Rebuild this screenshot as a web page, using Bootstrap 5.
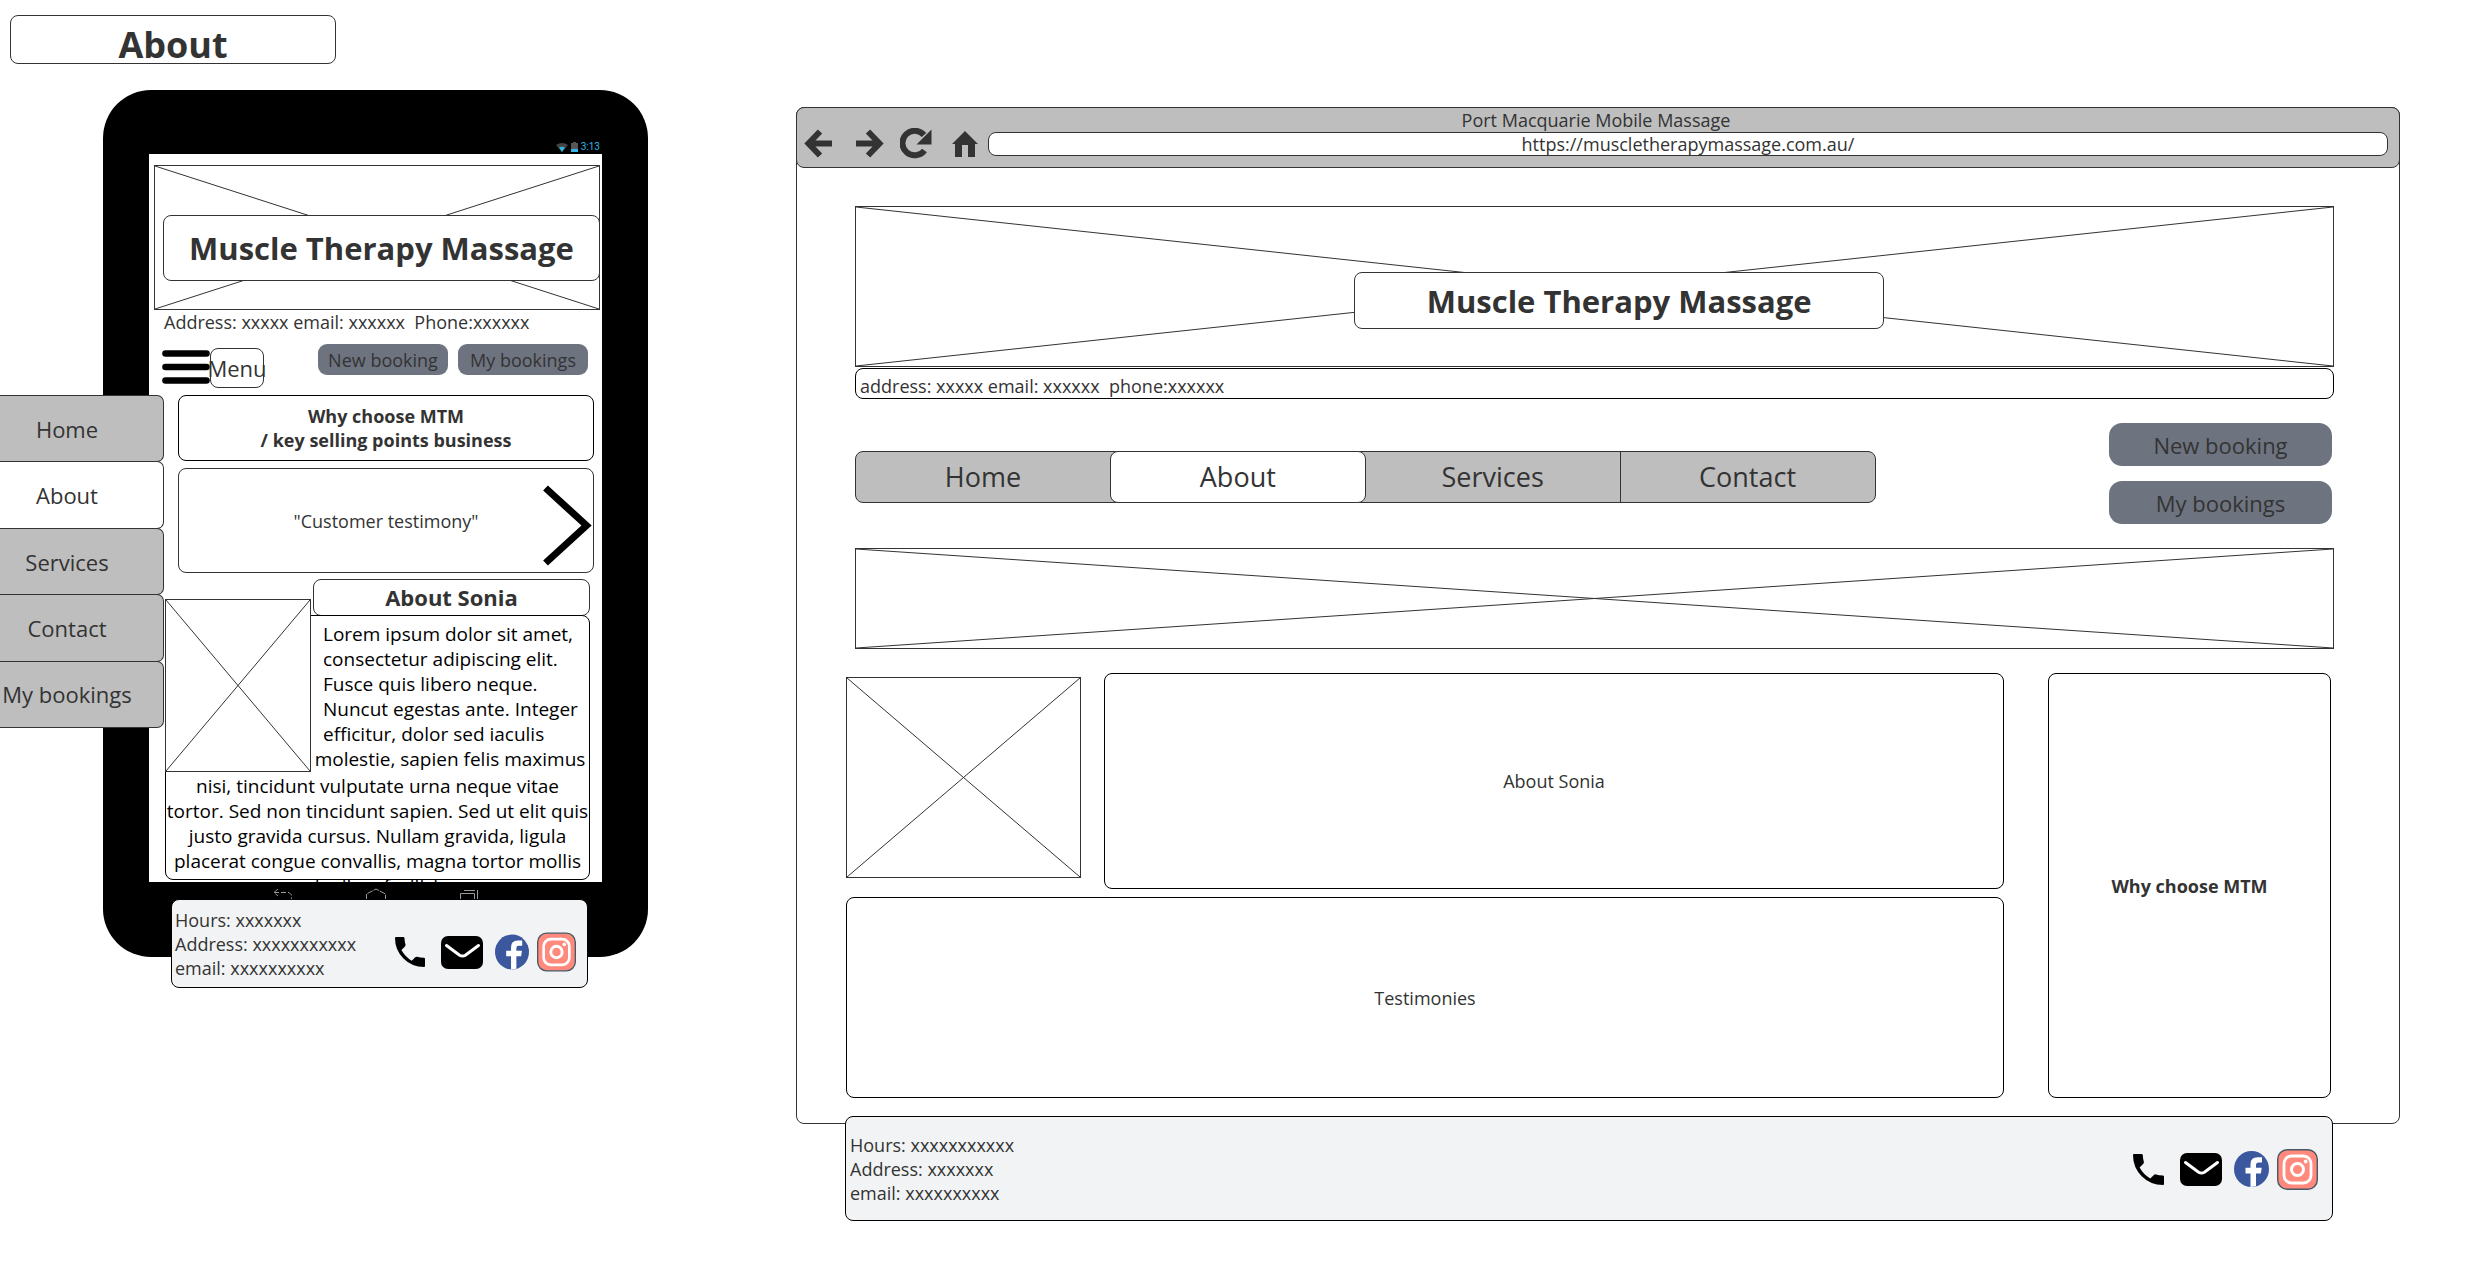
<!DOCTYPE html>
<html lang="en">
<head>
<meta charset="utf-8">
<meta name="viewport" content="width=device-width, initial-scale=1">
<title>Muscle Therapy Massage – About wireframe</title>
<link href="https://cdn.jsdelivr.net/npm/bootstrap@5.3.0/dist/css/bootstrap.min.css" rel="stylesheet">
<style>
  :root { --ink: #333; --fill: #bebebe; --action: #6e7380; --foot: #f1f3f5; }
  body { font-family: "Open Sans", sans-serif; font-size: 18px; line-height: 24px; color: var(--ink); background: #fff; overflow-x: hidden; }
  h1, h2, p, figure { margin: 0; }
  svg { display: block; }
  .frame { border: 1px solid var(--ink); border-radius: 8px; background: #fff; }
  .frame-dark { border: 1px solid #000; border-radius: 8px; background: #fff; }
  .site-title { font-size: 31px; line-height: 40px; font-weight: 700; white-space: nowrap; }

  /* crossed placeholder pictures */
  .placeholder-pic { position: relative; border: 1px solid var(--ink); background: #fff; }
  .placeholder-pic > svg { position: absolute; inset: 0; width: 100%; height: 100%; stroke: var(--ink); }

  /* left: page label and tablet */
  .col-tablet { flex: 0 0 796px; position: relative; padding-top: 15px; }
  .page-label { width: 326px; margin-left: 10px; padding-top: 10px; font-size: 36px; line-height: 37px; font-weight: 700; }
  .tablet { width: 545px; margin: 26px 0 0 103px; padding: 50px 46px 0; border-radius: 48px; background: #000; height: 867px; }
  .status-row { height: 14px; padding-right: 2px; gap: 3px; color: #33b5e5; font: 10px/14px Roboto, sans-serif; }
  .screen { overflow: hidden; background: #fff; padding: 11px 2px 2px 5px; }
  .screen-hero { height: 145px; padding: 49px 0 0 8px; }
  .screen-hero .frame { position: relative; height: 66px; margin-right: -1px; }
  .screen-address { padding-left: 10px; }
  .screen-tools { height: 44px; margin: 10px 12px 0 8px; }
  .screen-tools .toggler { width: 48px; padding: 0; border: 0; background: none; }
  .menu-tag { width: 54px; height: 40px; font-size: 22px; }
  .action { border: 0; background: var(--action); color: var(--ink); }
  .action-sm { width: 130px; height: 31px; border-radius: 9px; }
  .action-sm + .action-sm { margin-left: 10px; }
  .screen-cards { margin: 7px 6px 0 24px; gap: 7px; }
  .testimony { height: 105px; }
  .testimony .next { position: absolute; right: 1px; top: 16px; padding: 0; border: 0; background: none; }
  .bio { margin: 6px 10px 0 11px; color: #000; font-size: 19px; line-height: 25px; }
  .bio-head { width: 277px; height: 37px; color: var(--ink); font-size: 22px; line-height: 34px; }
  .bio-box { height: 265px; margin-top: -1px; padding-top: 6px; white-space: nowrap; }
  .bio-pic { flex: none; width: 146px; height: 173px; margin: -23px 0 2px -1px; }
  .bio-indent { padding-left: 12px; }
  .tablet-keys { height: 18px; padding-top: 6px; gap: 72px; overflow: hidden; }
  .tablet-foot { position: relative; width: 417px; margin: -58px 0 0 171px; padding: 8px 11px 7px 3px; }
  .contact-box { background: var(--foot); }

  /* slide-out menu over the tablet */
  .drawer { position: absolute; left: 0; top: 395px; width: 164px; height: 333px; }
  .drawer a { padding-right: 29px; border: 1px solid var(--ink); border-left: 0; border-radius: 0 7px 7px 0; background: var(--fill); color: var(--ink); font-size: 22px; text-decoration: none; white-space: nowrap; }
  .drawer a + a { margin-top: -1px; }
  .drawer a.current { background: #fff; }

  /* right: browser */
  .col-browser { padding: 107px 69px 0 0; min-width: 0; }
  .browser { border: 1px solid var(--ink); border-radius: 8px; }
  .chrome { margin: -1px; border: 1px solid var(--ink); border-radius: 8px; background: var(--fill); padding: 0 11px 11px 7px; }
  .chrome button { padding: 0; border: 0; background: none; color: var(--ink); }
  .chrome-buttons { margin: -4px 10px -3px 0; }
  .url { height: 24px; padding: 0; text-align: center; color: var(--ink); }
  .viewport { padding: 39px 65px 25px 58px; }
  .hero { height: 161px; padding: 65px 0 0 33.7%; }
  .hero .frame { position: relative; width: 54.1%; height: 57px; }
  .address-bar { height: 31px; margin-top: 1px; padding: 5px 4px 0; }
  .tabs { width: 69%; height: 52px; margin-top: 28px; border: 1px solid var(--ink); border-radius: 8px; background: var(--fill); }
  .tabs a { flex: 1; margin: -1px 0; color: var(--ink); font-size: 27px; line-height: 52px; text-align: center; text-decoration: none; }
  .tabs a.current { border: 1px solid var(--ink); border-radius: 8px; background: #fff; line-height: 50px; }
  .tabs a:last-child { border-left: 1px solid var(--ink); }
  .booking-actions { gap: 15px; padding-right: 2px; }
  .action-lg { width: 223px; height: 43px; border-radius: 13px; font-size: 22px; }
  .strip { height: 101px; margin-top: 24px; }
  .panels { margin: 24px 3px 0 -9px; gap: 44px; }
  .portrait { flex: 0 0 235px; height: 201px; margin: 4px 23px 0 0; }
  .about-panel { height: 216px; }
  .words-panel { height: 201px; margin-top: 8px; }
  .why-panel { flex: 0 0 283px; }
  .browser-foot { position: relative; margin: -8px 67px 0 49px; padding: 16px 14px 15px 4px; }
</style>
<script src="https://cdn.jsdelivr.net/npm/bootstrap@5.3.0/dist/js/bootstrap.bundle.min.js"></script>
</head>
<body>

<svg width="0" height="0" class="position-absolute" aria-hidden="true">
  <symbol id="cross" viewBox="0 0 100 100" preserveAspectRatio="none">
    <path d="M0 0L100 100M100 0L0 100" fill="none" vector-effect="non-scaling-stroke"/>
  </symbol>
  <symbol id="phone" viewBox="0 0 31 31">
    <path d="M0 1Q0 0 1 0H8.500Q9.700 0 9.800 1.200Q10 5 10.800 7.600Q11.200 8.800 10.300 9.700L6.600 13.500Q10.600 20.600 17.300 24.600L20.900 20.900Q21.700 20.100 22.900 20.500Q26 21.400 29.800 21.500Q31 21.600 31 22.800V30Q31 31 30 31Q17.500 31 8.700 22.200Q0 13.500 0 1Z"/>
  </symbol>
  <symbol id="mail" viewBox="0 0 42 33">
    <rect width="42" height="33" rx="7"/>
    <path d="M5.500 9.500L18.600 19.200Q21.500 21 24.400 19.200L37.500 9.500" fill="none" stroke="#fff" stroke-width="3" stroke-linecap="round"/>
  </symbol>
  <symbol id="facebook" viewBox="0 0 35 36">
    <ellipse cx="17.500" cy="18" rx="17.500" ry="18" fill="#3b579d"/>
    <path d="M16.500 36V22.500H11.500V16.800H16.500V13Q16.500 6.200 23.500 6.200H28V11.500H24.500Q22 11.500 22 14V16.800H27.700L26.900 22.500H22V35.300Z" fill="#fff"/>
  </symbol>
  <symbol id="instagram" viewBox="0 0 41 41">
    <rect x=".7" y=".7" width="39.600" height="39.600" rx="9.500" fill="#ff897d" stroke="#455a64" stroke-width="1.400"/>
    <rect x="7" y="7" width="27" height="27" rx="7.500" fill="none" stroke="#fff" stroke-width="2.800"/>
    <circle cx="20.500" cy="20.500" r="6" fill="none" stroke="#fff" stroke-width="3"/>
    <circle cx="28.700" cy="12.500" r="1.900" fill="#fff"/>
  </symbol>
</svg>

<div class="d-flex align-items-start">

  <section class="col-tablet">
    <h1 class="page-label frame text-center">About</h1>

    <div class="tablet">
      <div class="status-row d-flex justify-content-end align-items-center">
        <svg width="12" height="9" viewBox="0 0 12 9" aria-hidden="true"><path d="M0 2Q6-2 12 2L6 9Z" fill="#444"/><path d="M3 4.500Q6 3 9 4.500L6 9Z" fill="#33b5e5"/></svg>
        <svg width="7" height="10" viewBox="0 0 7 10" aria-hidden="true"><path d="M2 0H5V1H7V10H0V1H2Z" fill="#555"/><path d="M0 7H7V10H0Z" fill="#33b5e5"/></svg>
        <span>3:13</span>
      </div>

      <div class="screen">
        <div class="screen-hero placeholder-pic">
          <svg aria-hidden="true"><use href="#cross"/></svg>
          <div class="frame site-title d-flex align-items-center justify-content-center">Muscle Therapy Massage</div>
        </div>
        <p class="screen-address text-nowrap">Address: xxxxx email: xxxxxx&nbsp; Phone:xxxxxx</p>

        <div class="screen-tools d-flex align-items-start">
          <button class="toggler align-self-end pb-1" type="button" aria-label="Open menu">
            <svg width="48" height="34" viewBox="0 0 48 34" stroke="#000" stroke-width="6.600" stroke-linecap="round"><path d="M3.500 3.500H44.500M3.500 17H44.500M3.500 30.500H44.500"/></svg>
          </button>
          <span class="menu-tag frame align-self-end d-flex align-items-center justify-content-center">Menu</span>
          <button class="action action-sm ms-auto" type="button">New booking</button>
          <button class="action action-sm" type="button">My bookings</button>
        </div>

        <div class="screen-cards d-flex flex-column">
          <div class="frame-dark text-center fw-bold py-2">Why choose MTM<br>/ key selling points business</div>
          <div class="testimony frame position-relative d-flex align-items-center justify-content-center">
            <span>"Customer testimony"</span>
            <button class="next" type="button" aria-label="Next testimony">
              <svg width="50" height="81" viewBox="0 0 50 81"><path d="M3.500 3L44.500 40.500L3.500 78" fill="none" stroke="#000" stroke-width="7"/></svg>
            </button>
          </div>
        </div>

        <div class="bio">
          <h2 class="bio-head frame ms-auto text-center fw-bold">About Sonia</h2>
          <div class="bio-box frame-dark">
            <div class="d-flex">
              <figure class="bio-pic placeholder-pic"><svg aria-hidden="true"><use href="#cross"/></svg></figure>
              <div class="flex-grow-1">
                <p class="bio-indent">Lorem ipsum dolor sit amet,<br>consectetur adipiscing elit.<br>Fusce quis libero neque.<br>Nuncut egestas ante. Integer<br>efficitur, dolor sed iaculis</p>
                <p class="text-center">molestie, sapien felis maximus</p>
              </div>
            </div>
            <p class="text-center">nisi, tincidunt vulputate urna neque vitae<br>tortor. Sed non tincidunt sapien. Sed ut elit quis<br>justo gravida cursus. Nullam gravida, ligula<br>placerat congue convallis, magna tortor mollis<br>dapibus facilisis</p>
          </div>
        </div>
      </div>

      <div class="tablet-keys d-flex justify-content-center">
        <svg width="20" height="12" viewBox="0 0 20 12" fill="none" stroke="#999" aria-hidden="true"><path d="M5 1L1 4.500L5 8M1 4.500H16L18.500 7V12" stroke-dasharray="5 2"/></svg>
        <svg width="22" height="12" viewBox="0 0 22 12" fill="none" stroke="#999" aria-hidden="true"><path d="M1.500 12V6L11 1L20.500 6V12" stroke-dasharray="6 1"/></svg>
        <svg width="20" height="12" viewBox="0 0 20 12" fill="none" stroke="#999" aria-hidden="true"><path d="M1.500 12V5.500H15.500V12M5 2.500H16M18.500 2V12"/></svg>
      </div>
    </div>

    <footer class="tablet-foot frame-dark contact-box d-flex align-items-center">
      <div class="text-nowrap">Hours: xxxxxxx<br>Address: xxxxxxxxxxx<br>email: xxxxxxxxxx</div>
      <div class="d-flex align-items-center ms-auto pt-3">
        <a href="#" aria-label="Phone" class="me-3 text-black"><svg width="30" height="30" fill="currentColor"><use href="#phone"/></svg></a>
        <a href="#" aria-label="Email" class="me-2 pe-1 text-black"><svg width="42" height="33" fill="currentColor"><use href="#mail"/></svg></a>
        <a href="#" aria-label="Facebook" class="me-1 pe-1"><svg width="34" height="36"><use href="#facebook"/></svg></a>
        <a href="#" aria-label="Instagram"><svg width="39" height="40"><use href="#instagram"/></svg></a>
      </div>
    </footer>

    <nav class="drawer d-flex flex-column" aria-label="Mobile menu">
      <a href="#" class="flex-fill d-flex align-items-center justify-content-center">Home</a>
      <a href="#" class="flex-fill d-flex align-items-center justify-content-center current" aria-current="page">About</a>
      <a href="#" class="flex-fill d-flex align-items-center justify-content-center">Services</a>
      <a href="#" class="flex-fill d-flex align-items-center justify-content-center">Contact</a>
      <a href="#" class="flex-fill d-flex align-items-center justify-content-center">My bookings</a>
    </nav>
  </section>

  <section class="col-browser flex-grow-1">
    <div class="browser">
      <header class="chrome">
        <div class="text-center">Port Macquarie Mobile Massage</div>
        <div class="d-flex align-items-center">
          <div class="chrome-buttons d-flex align-items-center">
            <button type="button" aria-label="Back"><svg width="28" height="29" viewBox="0 0 28 29" fill="none" stroke="currentColor" stroke-width="6"><path d="M16 2.500L4.500 14.500L16 26.500M4 14.500H28"/></svg></button>
            <button type="button" class="ms-4" aria-label="Forward"><svg width="28" height="29" viewBox="0 0 28 29" fill="none" stroke="currentColor" stroke-width="6"><path d="M12 2.500L23.500 14.500L12 26.500M24 14.500H0"/></svg></button>
            <button type="button" class="ms-3" aria-label="Reload"><svg width="32" height="31" viewBox="0 0 32 31"><path d="M24.500 22.500A12.300 12.300 0 1 1 24 7" fill="none" stroke="currentColor" stroke-width="6"/><path d="M31.500 1.500V16.500H16.500Z" fill="currentColor"/></svg></button>
            <button type="button" class="ms-3 ps-1" aria-label="Home"><svg width="26" height="26" viewBox="0 0 26 26" fill="currentColor"><path d="M13 0L26 13H23V26H16V14H10V26H3V13H0Z"/></svg></button>
          </div>
          <input class="url frame flex-grow-1" type="text" aria-label="Address" value="https://muscletherapymassage.com.au/">
        </div>
      </header>

      <div class="viewport">
        <div class="hero placeholder-pic">
          <svg aria-hidden="true"><use href="#cross"/></svg>
          <div class="frame site-title d-flex align-items-center justify-content-center">Muscle Therapy Massage</div>
        </div>
        <div class="address-bar frame-dark">address: xxxxx email: xxxxxx&nbsp; phone:xxxxxx</div>

        <div class="d-flex align-items-start justify-content-between pt-4">
          <nav class="tabs d-flex" aria-label="Main menu">
            <a href="#">Home</a>
            <a href="#" class="current" aria-current="page">About</a>
            <a href="#">Services</a>
            <a href="#">Contact</a>
          </nav>
          <div class="booking-actions d-flex flex-column">
            <button class="action action-lg" type="button">New booking</button>
            <button class="action action-lg" type="button">My bookings</button>
          </div>
        </div>

        <div class="strip placeholder-pic"><svg aria-hidden="true"><use href="#cross"/></svg></div>

        <div class="panels d-flex">
          <div class="flex-grow-1">
            <div class="d-flex">
              <div class="portrait placeholder-pic"><svg aria-hidden="true"><use href="#cross"/></svg></div>
              <div class="about-panel frame-dark flex-grow-1 d-flex align-items-center justify-content-center">About Sonia</div>
            </div>
            <div class="words-panel frame-dark d-flex align-items-center justify-content-center">Testimonies</div>
          </div>
          <div class="why-panel frame-dark d-flex align-items-center justify-content-center fw-bold">Why choose MTM</div>
        </div>
      </div>
    </div>

    <footer class="browser-foot frame-dark contact-box d-flex align-items-center">
      <div class="text-nowrap">Hours: xxxxxxxxxxx<br>Address: xxxxxxx<br>email: xxxxxxxxxx</div>
      <div class="d-flex align-items-center ms-auto">
        <a href="#" aria-label="Phone" class="me-3 text-black"><svg width="31" height="31" fill="currentColor"><use href="#phone"/></svg></a>
        <a href="#" aria-label="Email" class="me-2 pe-1 text-black"><svg width="42" height="33" fill="currentColor"><use href="#mail"/></svg></a>
        <a href="#" aria-label="Facebook" class="me-1 pe-1"><svg width="35" height="36"><use href="#facebook"/></svg></a>
        <a href="#" aria-label="Instagram"><svg width="41" height="41"><use href="#instagram"/></svg></a>
      </div>
    </footer>
  </section>

</div>
</body>
</html>
